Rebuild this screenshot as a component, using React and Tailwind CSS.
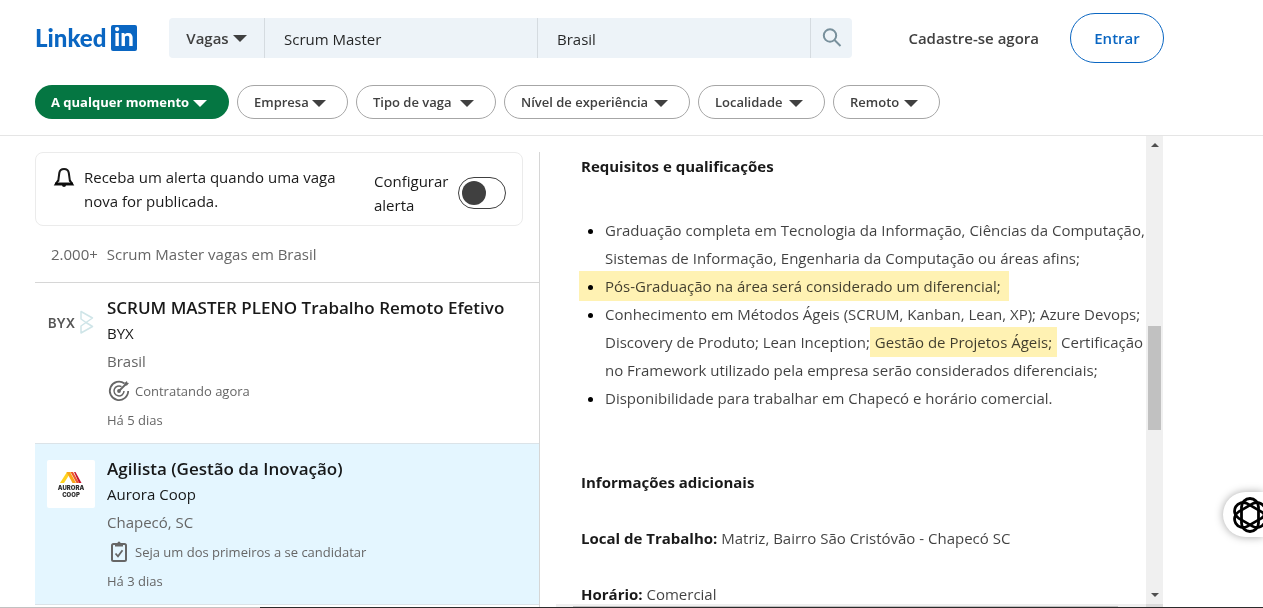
import React from "react";

const filters = [
  { label: "Empresa", width: "w-[111px]" },
  { label: "Tipo de vaga", width: "w-[140px]" },
  { label: "Nível de experiência", width: "w-[186px]" },
  { label: "Localidade", width: "w-[127px]" },
  { label: "Remoto", width: "w-[107px]" },
];

const jobs = [
  {
    title: "SCRUM MASTER PLENO Trabalho Remoto Efetivo",
    company: "BYX",
    place: "Brasil",
    note: "Contratando agora",
    date: "Há 5 dias",
    Logo: ByxLogo,
    Icon: TargetIcon,
  },
  {
    title: "Agilista (Gestão da Inovação)",
    company: "Aurora Coop",
    place: "Chapecó, SC",
    note: "Seja um dos primeiros a se candidatar",
    date: "Há 3 dias",
    Logo: AuroraLogo,
    Icon: ClipboardIcon,
    active: true,
  },
];

function Caret() {
  return (
    <svg className="w-[14px] h-[7px] shrink-0" viewBox="0 0 14 7" fill="currentColor" aria-hidden="true">
      <path d="M0 0h14L7 7z" />
    </svg>
  );
}

function LinkedInLogo() {
  return (
    <a href="#" aria-label="LinkedIn" className="flex items-center w-[134px] shrink-0 text-[#0a66c2]">
      <span className="w-[76px] font-['Lato'] font-black text-[24px] leading-[26px]">Linked</span>
      <span className="w-[26px] h-[26px] rounded-[2px] bg-[#0a66c2] text-white text-center font-['Lato'] font-black text-[24px] leading-6">
        in
      </span>
    </a>
  );
}

function ByxLogo() {
  return (
    <svg className="w-12 h-12" viewBox="0 0 48 48" role="img" aria-label="BYX">
      <text x="1" y="29" fontSize="13" fontWeight="600" fill="#555" fontFamily="Inter, sans-serif">BYX</text>
      <g fill="none" stroke="#cfe5e8" strokeWidth="1.5" strokeLinejoin="round">
        <path d="M34 12.500v7.500l5 3.500 6.500-4.500zM34 34v-7l5-3.500 6.500 4z" />
      </g>
    </svg>
  );
}

function AuroraLogo() {
  return (
    <svg className="w-12 h-12 rounded-[2px] bg-white" viewBox="0 0 48 48" role="img" aria-label="Aurora Coop">
      <path d="M13 23l7-11h4l-7 11z" fill="#ffd21f" />
      <path d="M19.500 12H23l6 11h-3.500z" fill="#f9a51a" />
      <path d="M23.500 12H26l6 11h-2.500z" fill="#ef5a28" />
      <path d="M27 12h1.500l6 11H32z" fill="#c4122f" />
      <g fontFamily="Inter, sans-serif" fontWeight="900" fontSize="6" fill="#333" textAnchor="middle">
        <text x="24" y="30">AURORA</text>
        <text x="24" y="37">COOP</text>
      </g>
    </svg>
  );
}

function TargetIcon() {
  return (
    <svg className="w-6 h-6" viewBox="0 0 24 24" fill="none" stroke="currentColor" aria-hidden="true">
      <path d="M17.500 4.500A9.200 9.200 0 1 0 21.200 12" strokeWidth="1.800" />
      <path d="M14.500 7.600A5 5 0 1 0 17 12" strokeWidth="1.500" />
      <path d="M12 12l7-7" strokeWidth="1.800" />
      <path d="M17.500 6.500V4L20 2l.3 1.700L22 4l-2 2.500z" fill="currentColor" stroke="none" />
      <circle cx="12" cy="12" r="1.900" fill="currentColor" stroke="none" />
    </svg>
  );
}

function ClipboardIcon() {
  return (
    <svg className="w-6 h-6" viewBox="0 0 24 24" fill="none" stroke="currentColor" strokeWidth="2" aria-hidden="true">
      <rect x="5" y="4" width="14" height="17" rx="1.500" />
      <path d="M8 3h2.500a1.500 1.500 0 0 1 3 0H16v3.500H8z" fill="currentColor" stroke="none" />
      <path d="M8.500 13.500l2.500 2.800 4.500-6" strokeWidth="1.800" />
    </svg>
  );
}

function Header() {
  return (
    <header className="shrink-0 pt-[13px] pb-4 pl-[35px] pr-[99px] border-b border-[#e5e5e5]">
      <div className="flex items-center">
        <LinkedInLogo />
        <form className="flex h-10 grow max-w-[683px] bg-[#edf3f8] rounded-[4px] overflow-hidden divide-x divide-[#d5dbe0] text-[15px]">
          <button type="button" className="w-24 shrink-0 flex items-center justify-center gap-1 font-semibold text-[#404040]">
            Vagas <Caret />
          </button>
          <input aria-label="Cargo ou empresa" defaultValue="Scrum Master" className="flex-1 min-w-0 px-[19px] pt-0.5 text-black/85" />
          <input aria-label="Localidade" defaultValue="Brasil" className="flex-1 min-w-0 px-[19px] pt-0.5 text-black/85" />
          <button type="button" aria-label="Buscar" className="w-[41px] shrink-0 flex items-center justify-center">
            <svg className="w-5 h-5" viewBox="0 0 20 20" fill="none" stroke="#78909c" strokeWidth="2" aria-hidden="true">
              <circle cx="8" cy="7.500" r="6.200" />
              <path d="M12.500 12l6 6" />
            </svg>
          </button>
        </form>
        <nav className="ml-auto flex items-center gap-[31px] text-[15px] font-semibold">
          <a href="#" className="text-[#404040] whitespace-nowrap">Cadastre-se agora</a>
          <a href="#" className="w-[94px] h-[50px] flex items-center justify-center rounded-full border border-[#0a66c2] text-[#0a66c2]">
            Entrar
          </a>
        </nav>
      </div>
      <div className="mt-[22px] flex gap-2 text-[13px]">
        <button className="w-[194px] h-[34px] pt-0.5 pl-4 pr-[22px] flex items-center justify-between rounded-full bg-[#057642] text-white font-bold whitespace-nowrap">
          A qualquer momento <Caret />
        </button>
        {filters.map((f) => (
          <button
            key={f.label}
            className={`${f.width} h-[34px] pt-0.5 pl-4 pr-[21px] flex items-center justify-between rounded-full border border-[#a6a6a6] text-[#404040] font-semibold whitespace-nowrap`}
          >
            {f.label} <Caret />
          </button>
        ))}
      </div>
    </header>
  );
}

function AlertCard() {
  return (
    <div className="mr-4 h-[74px] px-4 flex items-center border border-[#ebebeb] rounded-lg text-[15px] leading-6 text-black/90">
      <svg className="w-6 h-6 mb-[25px] shrink-0" viewBox="0 0 24 24" fill="none" stroke="currentColor" strokeWidth="2" aria-hidden="true">
        <path d="M6.200 16.500L7.300 8a4.800 4.800 0 0 1 9.500 0l1.200 8.500" />
        <path d="M6 15.500L3.500 19.500h17L18 15.500" />
        <path d="M3 18.500h18" />
        <path d="M10 20h4a2 2 0 0 1-4 0z" fill="currentColor" stroke="none" />
      </svg>
      <p className="ml-2 flex-1">
        Receba um alerta quando uma vaga
        <br />
        nova for publicada.
      </p>
      <label htmlFor="alerta" className="w-[84px] mt-2">Configurar alerta</label>
      <input
        id="alerta"
        type="checkbox"
        className="appearance-none w-12 h-8 mt-2 shrink-0 rounded-full border border-[#404040] p-[3px] before:block before:w-6 before:h-6 before:rounded-full before:bg-[#404040] checked:before:ml-4"
      />
    </div>
  );
}

function JobList() {
  return (
    <section className="w-[505px] shrink-0 border-r border-[#d6d6d6] overflow-hidden">
      <AlertCard />
      <h1 className="h-[56px] px-4 flex items-center gap-[9px] text-[15px] text-[#666]">
        <span>2.000+</span>
        <span>Scrum Master vagas em Brasil</span>
      </h1>
      <ul>
        {jobs.map(({ Logo, Icon, ...job }) => (
          <li key={job.title} className={job.active ? "flex border-y border-[#dbe3e8] bg-[#e4f6ff]" : "flex border-t border-[#d6d6d6]"}>
            <div className="w-[72px] shrink-0 pt-4 pl-3">
              <Logo />
            </div>
            <div className="h-[160px] pt-3 text-[#666]">
              <h3 className="text-[17px] leading-[26px] font-semibold text-black/90 whitespace-nowrap">
                <a href="#">{job.title}</a>
              </h3>
              <h4 className="text-[15px] leading-6 text-black/90">{job.company}</h4>
              <p className="mt-1 text-[15px] leading-6">{job.place}</p>
              <p className="mt-1 flex items-center gap-1 text-[13px] leading-7">
                <Icon />
                {job.note}
              </p>
              <time className="block mt-1 text-[13px] leading-[22px]">{job.date}</time>
            </div>
          </li>
        ))}
      </ul>
    </section>
  );
}

function JobDetails() {
  return (
    <section className="flex-1 min-w-0 flex flex-col">
      <div className="flex-1 min-h-0 pl-[41px] overflow-hidden whitespace-nowrap text-[15px] leading-7 text-black/75">
        <h2 className="font-bold text-black/90">Requisitos e qualificações</h2>
        <ul className="mt-9 pl-6 list-disc marker:text-black">
          <li>
            Graduação completa em Tecnologia da Informação, Ciências da Computação,
            <br />
            Sistemas de Informação, Engenharia da Computação ou áreas afins;
          </li>
          <li>
            <mark className="-ml-[26px] pl-[26px] pr-2 py-[5px] bg-[#fff2b3] text-inherit mix-blend-multiply">
              Pós-Graduação na área será considerado um diferencial;
            </mark>
          </li>
          <li>
            Conhecimento em Métodos Ágeis (SCRUM, Kanban, Lean, XP); Azure Devops;
            <br />
            Discovery de Produto; Lean Inception;{" "}
            <mark className="-ml-1 pl-[5px] pr-[5px] py-[5px] bg-[#fff2b3] text-inherit mix-blend-multiply">Gestão de Projetos Ágeis;</mark>{" "}
            Certificação
            <br />
            no Framework utilizado pela empresa serão considerados diferenciais;
          </li>
          <li>Disponibilidade para trabalhar em Chapecó e horário comercial.</li>
        </ul>
        <h2 className="mt-14 font-bold text-black/90">Informações adicionais</h2>
        <p className="mt-7">
          <strong className="text-black/90">Local de Trabalho:</strong> Matriz, Bairro São Cristóvão - Chapecó SC
        </p>
        <p className="mt-7">
          <strong className="text-black/90">Horário:</strong> Comercial
        </p>
      </div>
      <div className="ml-4 h-[3px] shrink-0 flex items-end pl-[17px] pr-7 bg-[#f0f0f0]" aria-hidden="true">
        <div className="flex-1 h-px bg-[#c1c1c1]" />
      </div>
    </section>
  );
}

function Scrollbar() {
  return (
    <div className="w-[17px] shrink-0 flex flex-col items-center bg-[#f0f0f0] border-b-3 border-[#dcdcdc] text-[#505050]" aria-hidden="true">
      <svg className="w-4 h-[17px] shrink-0" viewBox="0 0 16 17" fill="currentColor">
        <path d="M4 11l4-4 4 4z" />
      </svg>
      <div className="w-[13px] h-[104px] mt-[173px] mb-auto bg-[#c1c1c1]" />
      <svg className="w-4 h-[17px] shrink-0" viewBox="0 0 16 17" fill="currentColor">
        <path d="M4 6l4 4 4-4z" />
      </svg>
    </div>
  );
}

function FloatingAssistant() {
  return (
    <button aria-label="Assistente" className="fixed right-0 top-[492px] w-10 h-[45px] pl-2 rounded-l-full bg-white shadow-[0_0_8px_rgba(0,0,0,0.35)] overflow-hidden">
      <svg className="w-[38px] h-[38px]" viewBox="-19 -19 38 38" fill="none" stroke="#000" strokeWidth="2.800" aria-hidden="true">
        <rect x="-8.500" y="-16.500" width="17" height="33" rx="8.500" />
        <rect x="-8.500" y="-16.500" width="17" height="33" rx="8.500" transform="rotate(60)" />
        <rect x="-8.500" y="-16.500" width="17" height="33" rx="8.500" transform="rotate(120)" />
      </svg>
    </button>
  );
}

export default function App() {
  return (
    <div className="h-screen flex flex-col overflow-hidden bg-white font-['Open_Sans','Noto_Sans',sans-serif]">
      <Header />
      <main className="flex-1 min-h-0 flex pl-[35px] pr-[100px]">
        <div className="flex-1 min-w-0 flex pt-4">
          <JobList />
          <JobDetails />
        </div>
        <Scrollbar />
      </main>
      <div className="h-px shrink-0 flex" aria-hidden="true">
        <div className="w-[260px] bg-[#c1c1c1]" />
        <div className="flex-1 bg-[#2b2b2b]" />
      </div>
      <FloatingAssistant />
    </div>
  );
}
